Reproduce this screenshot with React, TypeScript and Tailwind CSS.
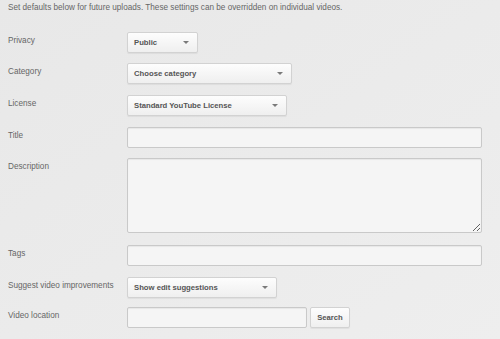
import React from 'react';

function Arrow() {
  return (
    <span className="w-0 h-0 border-l-[3px] border-r-[3px] border-t-[3px] border-l-transparent border-r-transparent border-t-[#7a7a7a]" />
  );
}

function Select({ label, width }: { label: string; width: string }) {
  return (
    <button
      type="button"
      className={`${width} h-[21px] flex items-center justify-between pl-[6px] pr-[8px] rounded-[2px] border border-[#d2d2d2] bg-gradient-to-b from-[#fdfdfd] to-[#efefef] shadow-[0_1px_1px_rgba(0,0,0,0.06)] text-[7.7px] font-bold text-[#555]`}
    >
      <span>{label}</span>
      <Arrow />
    </button>
  );
}

function Row({ label, className, children }: { label: string; className?: string; children: React.ReactNode }) {
  return (
    <div className={`flex items-start ${className ?? ''}`}>
      <label className="w-[119px] shrink-0 pt-[4px] text-[8.2px] leading-[10px] text-[#666]">{label}</label>
      {children}
    </div>
  );
}

const inputCls =
  'h-[21px] rounded-[2px] border border-[#c9c9c9] bg-[#f5f5f5] shadow-[inset_0_1px_1px_rgba(0,0,0,0.06)] outline-none';

export default function App() {
  return (
    <div className="w-[500px] h-[339px] overflow-hidden bg-[#ebebeb] bg-gradient-to-br from-[#e8e8e8] to-[#eeeeee] pl-2 pt-[3px] font-['Liberation_Sans',Arial,sans-serif]">
      <p className="text-[8.2px] leading-[10px] text-[#666]">
        Set defaults below for future uploads. These settings can be overridden on individual videos.
      </p>
      <div className="flex flex-col mt-[19px]">
        <Row label="Privacy">
          <Select label="Public" width="w-[71px]" />
        </Row>
        <Row label="Category" className="mt-[10px]">
          <Select label="Choose category" width="w-[165px]" />
        </Row>
        <Row label="License" className="mt-[11px]">
          <Select label="Standard YouTube License" width="w-[160px]" />
        </Row>
        <Row label="Title" className="mt-[11px]">
          <input className={`${inputCls} w-[355px]`} />
        </Row>
        <Row label="Description" className="mt-[10px]">
          <textarea className={`${inputCls} w-[355px] h-[75px]`} />
        </Row>
        <Row label="Tags" className="mt-[12px]">
          <input className={`${inputCls} w-[355px]`} />
        </Row>
        <Row label="Suggest video improvements" className="mt-[11px]">
          <Select label="Show edit suggestions" width="w-[150px]" />
        </Row>
        <Row label="Video location" className="mt-[9px]">
          <div className="flex gap-[3px]">
            <input className={`${inputCls} w-[180px]`} />
            <button
              type="button"
              className="w-[40px] h-[21px] rounded-[2px] border border-[#d2d2d2] bg-gradient-to-b from-[#fdfdfd] to-[#efefef] shadow-[0_1px_1px_rgba(0,0,0,0.06)] text-[7.7px] font-bold text-[#555]"
            >
              Search
            </button>
          </div>
        </Row>
      </div>
    </div>
  );
}
